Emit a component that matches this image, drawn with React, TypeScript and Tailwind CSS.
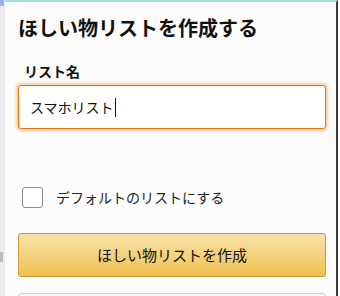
import React from "react";

export default function App() {
  const font = { fontFamily: '"Noto Sans CJK JP", "Noto Sans", sans-serif' };
  return (
    <div className="w-[340px] h-[296px] flex overflow-hidden bg-white" style={font}>
      <div className="w-[5px] h-full shrink-0 bg-[#ececf0] flex flex-col">
        <div className="h-[6px] w-[4px] shrink-0 bg-[#8fb8e8]" />
        <div className="mt-[246px] h-[10px] w-[3px] shrink-0 bg-[#9a9aa0] opacity-60" />
      </div>
      <div className="w-[333px] h-full shrink-0 overflow-hidden bg-[#fdfcfd] border-t-2 border-t-[#9fe3d8] border-r-2 border-r-[#3a3a3a] pl-[13px] pr-[8px] pt-[12px] flex flex-col">
        <h1 className="shrink-0 text-[20px] leading-[28px] font-bold text-[#111]">ほしい物リストを作成する</h1>
        <div className="shrink-0 mt-[19px] pl-[6px] text-[14px] leading-[20px] font-bold text-[#111]">リスト名</div>
        <div className="shrink-0 mt-[4px] h-[44px] w-[308px] rounded-[3px] border border-[#e77600] shadow-[0_0_3px_2px_rgba(228,121,17,0.35)] bg-white flex items-center pl-[11px]">
          <span className="text-[14px] text-[#111]">スマホリスト</span>
          <span className="ml-[1px] w-[1px] h-[19px] bg-[#111]" />
        </div>
        <div className="shrink-0 mt-[58px] flex items-center h-[21px] pl-[4px]">
          <div className="w-[21px] h-[21px] shrink-0 rounded-[3px] border border-[#8d8d8f] bg-white" />
          <span className="ml-[13px] text-[14px] text-[#222]">デフォルトのリストにする</span>
        </div>
        <div className="shrink-0 mt-[25px] h-[44px] w-[308px] rounded-[3px] border border-[#c89a3a] bg-gradient-to-b from-[#f8e2a8] to-[#f0c14b] flex items-center justify-center">
          <span className="text-[15px] text-[#111]">ほしい物リストを作成</span>
        </div>
        <div className="shrink-0 mt-[16px] h-[44px] w-[308px] rounded-[3px] border border-[#cfcfd3] bg-[#f6f6f8]" />
      </div>
      <div className="w-[2px] h-full shrink-0 bg-white" />
    </div>
  );
}
